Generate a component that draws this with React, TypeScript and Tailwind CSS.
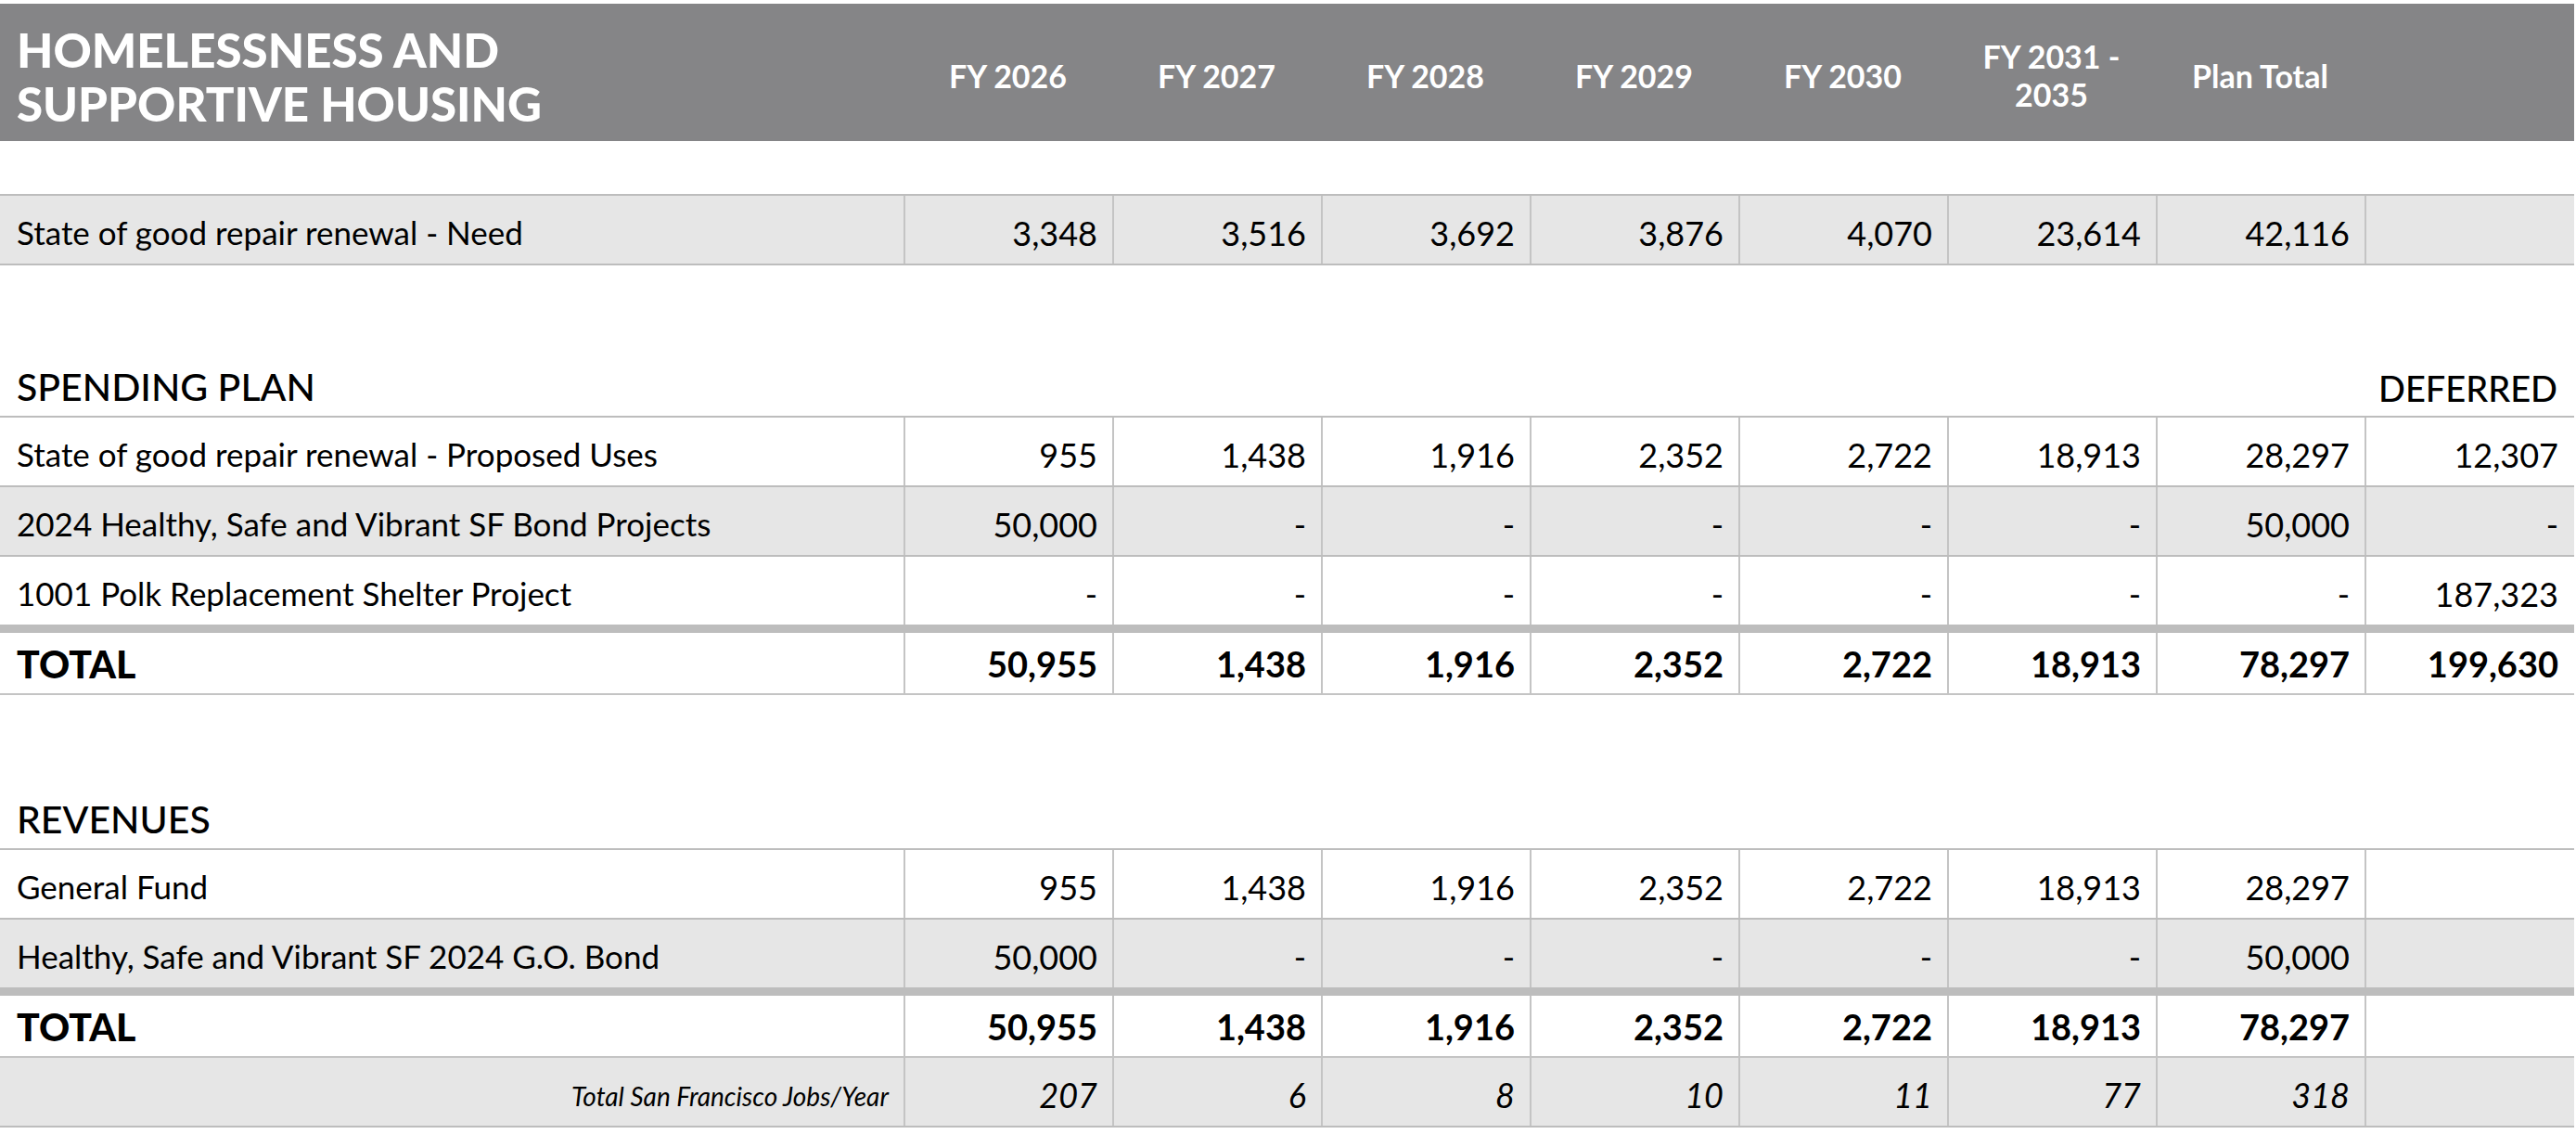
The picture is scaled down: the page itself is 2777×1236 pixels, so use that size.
import React from 'react';

const cols = ['FY 2026', 'FY 2027', 'FY 2028', 'FY 2029', 'FY 2030', 'FY 2031 - 2035', 'Plan Total', ''];

type Row = {
  label: string;
  values: string[];
  shaded?: boolean;
};

const needRow: Row = {
  label: 'State of good repair renewal - Need',
  values: ['3,348', '3,516', '3,692', '3,876', '4,070', '23,614', '42,116', ''],
  shaded: true,
};

const spending: Row[] = [
  {
    label: 'State of good repair renewal - Proposed Uses',
    values: ['955', '1,438', '1,916', '2,352', '2,722', '18,913', '28,297', '12,307'],
  },
  {
    label: '2024 Healthy, Safe and Vibrant SF Bond Projects',
    values: ['50,000', '-', '-', '-', '-', '-', '50,000', '-'],
    shaded: true,
  },
  {
    label: '1001 Polk Replacement Shelter Project',
    values: ['-', '-', '-', '-', '-', '-', '-', '187,323'],
  },
];

const spendingTotal = ['50,955', '1,438', '1,916', '2,352', '2,722', '18,913', '78,297', '199,630'];

const revenues: Row[] = [
  {
    label: 'General Fund',
    values: ['955', '1,438', '1,916', '2,352', '2,722', '18,913', '28,297', ''],
  },
  {
    label: 'Healthy, Safe and Vibrant SF 2024 G.O. Bond',
    values: ['50,000', '-', '-', '-', '-', '-', '50,000', ''],
    shaded: true,
  },
];

const revenueTotal = ['50,955', '1,438', '1,916', '2,352', '2,722', '18,913', '78,297', ''];
const jobs = ['207', '6', '8', '10', '11', '77', '318', ''];

const grid = 'grid grid-cols-[974px_repeat(8,225px)]';

function DataRow({ row }: { row: Row }) {
  return (
    <div className={`${grid} h-[75px] border-b-2 border-[#bdbdbd] ${row.shaded ? 'bg-[#e6e6e6]' : 'bg-white'}`}>
      <div className="flex items-center pl-[18px] pt-[6px] text-[35px] text-black">{row.label}</div>
      {row.values.map((v, i) => (
        <div key={i} className="flex items-center justify-end border-l-2 border-[#c4c4c4] pr-[16px] pt-[6px] text-[36px] text-black">
          {v}
        </div>
      ))}
    </div>
  );
}

function TotalRow({ values }: { values: string[] }) {
  return (
    <div className={`${grid} h-[74px] border-t-[7px] border-b-2 border-t-[#bdbdbd] border-b-[#c4c4c4] bg-white`}>
      <div className="flex items-center pl-[18px] pt-[2px] text-[41px] font-black text-black">TOTAL</div>
      {values.map((v, i) => (
        <div key={i} className="flex items-center justify-end border-l-2 border-[#c4c4c4] pr-[16px] pt-[2px] text-[38px] font-bold text-black">
          {v}
        </div>
      ))}
    </div>
  );
}

function SectionLabel({ title, right }: { title: string; right?: string }) {
  return (
    <div className="flex h-[62px] items-end justify-between border-b-2 border-[#bdbdbd] px-[18px] pb-[1px] font-medium text-black">
      <span className="text-[41px]">{title}</span>
      {right && <span className="text-[38px]">{right}</span>}
    </div>
  );
}

export default function App() {
  return (
    <div className="min-h-screen w-[2777px] bg-white pt-[4px] font-['Lato',_'Liberation_Sans',_sans-serif]">
      <div className="w-[2775px]">
        {/* Header */}
        <div className={`${grid} h-[148px] bg-[#858587] text-white`}>
          <div className="flex flex-col justify-center pl-[18px] pt-[10px] text-[51px] font-black leading-[58px]">
            <span>HOMELESSNESS AND</span>
            <span>SUPPORTIVE HOUSING</span>
          </div>
          {cols.map((c, i) => (
            <div key={i} className="flex items-center justify-center px-[20px] pt-[6px] text-center text-[34px] font-bold leading-[41px]">
              {c}
            </div>
          ))}
        </div>

        <div className="h-[57px]" />
        <div className="border-t-2 border-[#bdbdbd]">
          <DataRow row={needRow} />
        </div>

        <div className="h-[102px]" />
        <SectionLabel title="SPENDING PLAN" right="DEFERRED" />
        {spending.map((r) => (
          <DataRow key={r.label} row={r} />
        ))}
        <TotalRow values={spendingTotal} />

        <div className="h-[105px]" />
        <SectionLabel title="REVENUES" />
        {revenues.map((r) => (
          <DataRow key={r.label} row={r} />
        ))}
        <TotalRow values={revenueTotal} />

        <div className={`${grid} h-[75px] border-b-2 border-[#bdbdbd] bg-[#e6e6e6]`}>
          <div className="flex items-center justify-end pr-[16px] pt-[8px] text-[28px] italic text-black">
            Total San Francisco Jobs/Year
          </div>
          {jobs.map((v, i) => (
            <div key={i} className="flex items-center justify-end border-l-2 border-[#c4c4c4] pr-[16px] pt-[6px] text-[36px] italic text-black">
              {v}
            </div>
          ))}
        </div>
      </div>
    </div>
  );
}
